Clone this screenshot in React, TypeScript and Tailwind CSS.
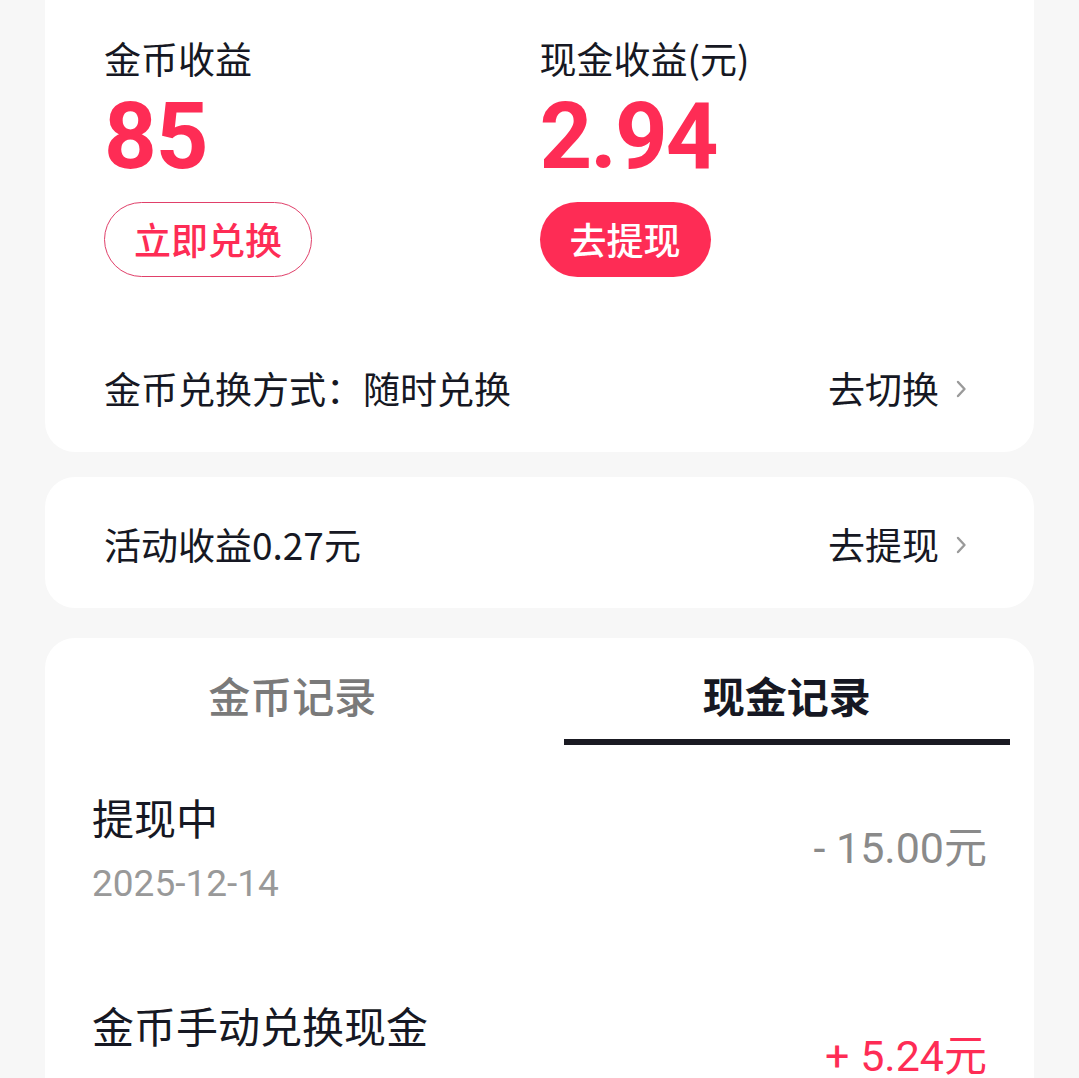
import React from "react";

const cn = '"Noto Sans CJK SC", "Noto Sans", sans-serif';
const num = 'Roboto, "Noto Sans CJK SC", sans-serif';

const Chevron = () => (
  <svg width="14" height="18" viewBox="0 0 14 18" fill="none" className="ml-[15px]">
    <path d="M4 2 L10.5 9 L4 16" stroke="#9a9a9a" strokeWidth="2.4" strokeLinecap="round" strokeLinejoin="round" />
  </svg>
);

const records = [
  { title: "提现中", date: "2025-12-14", amount: "- 15.00元", plus: false },
  { title: "金币手动兑换现金", date: "2025-12-14", amount: "+ 5.24元", plus: true },
];

export default function App() {
  return (
    <div className="h-[1078px] bg-[#f7f7f7] px-[45px] overflow-hidden" style={{ fontFamily: cn }}>
      {/* Balance card */}
      <div className="bg-white rounded-b-[30px]">
        <div className="grid grid-cols-2 px-[59px] pt-[36px]">
          <div className="flex flex-col items-start">
            <span className="text-[37px] leading-[44px] text-[#161823]">金币收益</span>
            <span className="mt-[11px] text-[92px] leading-[92px] font-bold text-[#fe2c55] tracking-[-1px]" style={{ fontFamily: num }}>85</span>
            <button className="mt-[19px] h-[75px] px-[29px] rounded-full border border-[#e0406a] text-[37px] font-medium text-[#fe2c55]">立即兑换</button>
          </div>
          <div className="flex flex-col items-start">
            <span className="text-[37px] leading-[44px] text-[#161823]">现金收益(元)</span>
            <span className="mt-[11px] text-[92px] leading-[92px] font-bold text-[#fe2c55] tracking-[-2px]" style={{ fontFamily: num }}>2.94</span>
            <button className="mt-[19px] h-[75px] px-[30px] rounded-full bg-[#fe2c55] text-[37px] font-medium text-white">去提现</button>
          </div>
        </div>
        <div className="mt-[51px] h-[124px] flex items-center justify-between pl-[59px] pr-[66px] pb-[2px]">
          <span className="text-[37px] text-[#161823]">金币兑换方式：随时兑换</span>
          <div className="flex items-center">
            <span className="text-[37px] text-[#161823]">去切换</span>
            <Chevron />
          </div>
        </div>
      </div>

      {/* Activity card */}
      <div className="mt-[25px] h-[131px] bg-white rounded-[30px] flex items-center justify-between pl-[59px] pr-[66px] pt-[4px]">
        <span className="text-[37px] text-[#161823]">活动收益0.27元</span>
        <div className="flex items-center">
          <span className="text-[37px] text-[#161823]">去提现</span>
          <Chevron />
        </div>
      </div>

      {/* Records card */}
      <div className="mt-[30px] bg-white rounded-[30px] pb-10">
        <div className="grid grid-cols-2">
          <div className="flex flex-col items-center pt-[31px]">
            <span className="text-[42px] leading-[52px] text-[#7a7a7a] font-medium">金币记录</span>
          </div>
          <div className="flex flex-col items-center pt-[31px] px-[24px]">
            <span className="text-[42px] leading-[52px] text-[#161823] font-bold">现金记录</span>
            <div className="mt-[18px] h-[6px] w-full bg-[#1a1a22]" />
          </div>
        </div>
        <div className="px-[47px]">
          {records.map((r, i) => (
            <div key={i} className={`flex items-center justify-between ${i === 0 ? "pt-[46px]" : "pt-[93px]"}`}>
              <div className="flex flex-col">
                <span className="text-[42px] leading-[52px] text-[#161823]">{r.title}</span>
                <span className="mt-[19px] text-[37px] leading-[44px] text-[#999999]" style={{ fontFamily: num }}>{r.date}</span>
              </div>
              <span className={`text-[43px] ${r.plus ? "text-[#fe2c55]" : "text-[#8a8a8a]"}`} style={{ fontFamily: num }}>{r.amount}</span>
            </div>
          ))}
        </div>
      </div>
    </div>
  );
}
